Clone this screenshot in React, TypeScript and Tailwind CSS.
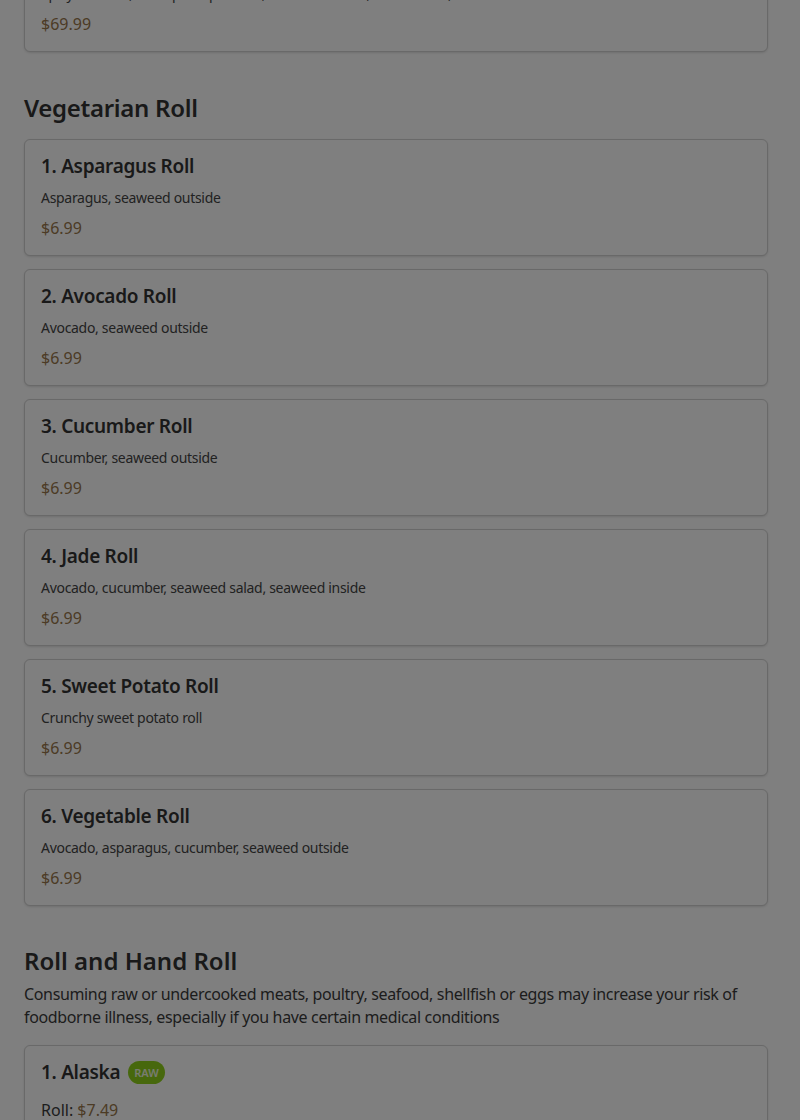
import React from "react";

type Item = { name: string; desc: string; price: string };

const vegetarian: Item[] = [
  { name: "1. Asparagus Roll", desc: "Asparagus, seaweed outside", price: "$6.99" },
  { name: "2. Avocado Roll", desc: "Avocado, seaweed outside", price: "$6.99" },
  { name: "3. Cucumber Roll", desc: "Cucumber, seaweed outside", price: "$6.99" },
  { name: "4. Jade Roll", desc: "Avocado, cucumber, seaweed salad, seaweed inside", price: "$6.99" },
  { name: "5. Sweet Potato Roll", desc: "Crunchy sweet potato roll", price: "$6.99" },
  { name: "6. Vegetable Roll", desc: "Avocado, asparagus, cucumber, seaweed outside", price: "$6.99" },
];

function MenuCard({ item }: { item: Item }) {
  return (
    <div className="rounded-md border border-[#d2d2d2] bg-white px-4 pt-3 pb-[15px] shadow-sm">
      <h3 className="text-[19px] leading-7 font-semibold tracking-[-0.3px] text-[#333]">{item.name}</h3>
      <p className="mt-2 text-sm leading-5 tracking-[-0.3px] text-[#444]">{item.desc}</p>
      <p className="mt-2 text-base leading-6 text-[#98764a]">{item.price}</p>
    </div>
  );
}

export default function App() {
  return (
    <div className="relative h-[1120px] overflow-hidden bg-white font-['Noto_Sans','Lato',sans-serif]">
      <div className="pl-6 pr-8 -mt-[65px]">
        {/* previous section tail */}
        <MenuCard
          item={{
            name: "8. Party Combo",
            desc: "Spicy tuna roll, shrimp tempura roll, eel avocado roll, rainbow roll, salmon roll",
            price: "$69.99",
          }}
        />

        {/* Vegetarian */}
        <h2 className="mt-10 text-2xl leading-8 font-semibold tracking-[-0.3px] text-[#333]">Vegetarian Roll</h2>
        <div className="mt-[15px] flex flex-col gap-[13px]">
          {vegetarian.map((it) => (
            <MenuCard key={it.name} item={it} />
          ))}
        </div>

        {/* Roll and Hand Roll */}
        <h2 className="mt-[39px] text-2xl leading-8 font-semibold text-[#333]">Roll and Hand Roll</h2>
        <p className="mt-[6px] text-base leading-[23px] tracking-[-0.35px] text-[#3a3a3a]">
          Consuming raw or undercooked meats, poultry, seafood, shellfish or eggs may increase your risk of
          foodborne illness, especially if you have certain medical conditions
        </p>
        <div className="mt-4 rounded-md border border-[#d2d2d2] bg-white px-4 pt-3 pb-4 shadow-sm">
          <div className="flex items-center gap-[8px]">
            <h3 className="text-[19px] leading-7 font-semibold tracking-[-0.3px] text-[#333]">1. Alaska</h3>
            <span className="rounded-full bg-[#8fd11a] px-[6px] py-[4px] text-[11px] leading-[15px] font-semibold text-[#f0f8e0]">
              RAW
            </span>
          </div>
          <p className="mt-3 text-base leading-6 text-[#3a3a3a]">
            Roll: <span className="text-[#98764a]">$7.49</span>
          </p>
          <p className="mt-1 text-base leading-6 text-[#3a3a3a]">
            Hand Roll: <span className="text-[#98764a]">$6.49</span>
          </p>
        </div>
      </div>

      {/* modal backdrop */}
      <div className="fixed inset-0 bg-black/50" />
    </div>
  );
}
